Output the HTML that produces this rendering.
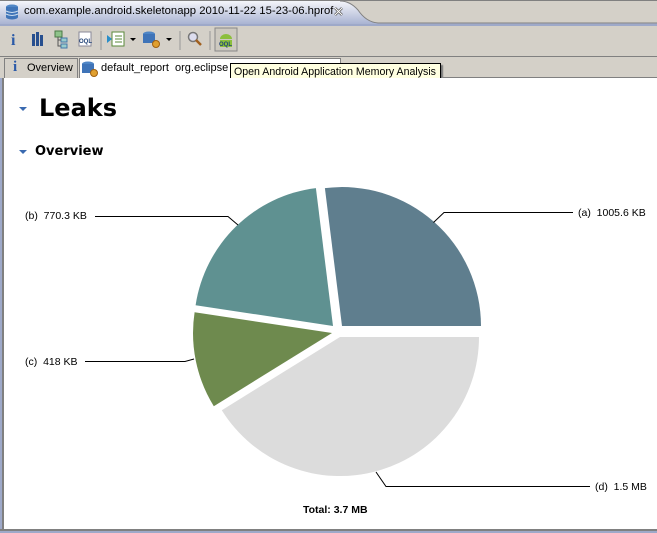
<!DOCTYPE html>
<html><head><style>
*{margin:0;padding:0;box-sizing:border-box}
body{width:657px;height:533px;overflow:hidden;background:#d4d0c8;font-family:"Liberation Sans",sans-serif;font-size:11px;position:relative}
.abs{position:absolute;white-space:nowrap}
</style></head><body>
<div class="abs" style="left:0;top:0;width:657px;height:25px;background:#d4d0c8;border-top:1px solid #808080"></div>
<svg class="abs" style="left:0;top:0" width="657" height="27">
<defs><linearGradient id="tg" x1="0" y1="0" x2="0" y2="1"><stop offset="0" stop-color="#f4f5fa"/><stop offset="1" stop-color="#a3aecf"/></linearGradient></defs>
<path d="M0 1 L340 1 Q350 1 358 10 Q366 22 378 23 L657 23 L657 26 L0 26 Z" fill="url(#tg)"/>
<path d="M340 1 Q350 1 358 10 Q366 22 378 23 L657 23" fill="none" stroke="#808080"/>
<rect x="0" y="24" width="657" height="2" fill="#9ea9c9"/>
<g transform="translate(4,3)"><ellipse cx="8" cy="4" rx="6" ry="2.5" fill="#4f86c6"/><rect x="2" y="4" width="12" height="10" fill="#3f74b8"/><ellipse cx="8" cy="14" rx="6" ry="2.5" fill="#3f74b8"/><path d="M2 8 Q8 11 14 8 M2 11 Q8 14 14 11" stroke="#cde" fill="none"/></g>
<path d="M335 8 l7 7 M342 8 l-7 7" stroke="#555" stroke-width="2.5"/><path d="M335 8 l7 7 M342 8 l-7 7" stroke="#fff" stroke-width="1"/>
</svg>
<div class="abs" style="left:24px;top:5px;font-size:11.3px;color:#000">com.example.android.skeletonapp 2010-11-22 15-23-06.hprof</div>
<svg class="abs" style="left:0;top:26px" width="260" height="30">
<text x="11" y="19" font-family="Liberation Serif" font-weight="bold" font-size="16" fill="#2b5aa8">i</text>
<rect x="32" y="8" width="3" height="12" fill="#274f8f"/><rect x="36" y="6" width="3" height="14" fill="#274f8f"/><rect x="40" y="9" width="3" height="11" fill="#274f8f"/>
<rect x="55" y="5" width="7" height="6" fill="#8ec38a" stroke="#4a7a46"/><rect x="61" y="12" width="6" height="4" fill="#9cc" stroke="#47a"/><rect x="61" y="18" width="6" height="4" fill="#9cc" stroke="#47a"/><path d="M58 11 V20 H61 M58 14 H61" stroke="#555" fill="none"/>
<rect x="79" y="6" width="12" height="14" fill="#fff" stroke="#889"/><text x="79" y="17" font-size="6" font-weight="bold" fill="#247">OQL</text>
<line x1="101" y1="5" x2="101" y2="24" stroke="#999"/>
<path d="M107 9 l5 4 -5 4z" fill="#2a8ec8"/><rect x="112" y="6" width="12" height="14" fill="#fff" stroke="#5a8a3a"/><path d="M115 10h7M115 13h7M115 16h7" stroke="#5a8a3a"/>
<path d="M130 12 l3 3 3-3z" fill="#000"/>
<ellipse cx="149" cy="8" rx="6" ry="2.5" fill="#4f86c6"/><rect x="143" y="8" width="12" height="9" fill="#3f74b8"/><circle cx="156" cy="18" r="3.5" fill="#e0a030" stroke="#a06010"/>
<path d="M166 12 l3 3 3-3z" fill="#000"/>
<line x1="180" y1="5" x2="180" y2="24" stroke="#999"/>
<circle cx="193" cy="11" r="4.5" fill="#dde" stroke="#777" stroke-width="1.5"/><path d="M196 14 l5 5" stroke="#a06020" stroke-width="2.5"/>
<line x1="210" y1="5" x2="210" y2="24" stroke="#999"/>
<rect x="215" y="2" width="22" height="23" fill="#cdc9c0" stroke="#888"/>
<path d="M220 13 a6 5 0 0 1 12 0z" fill="#8cbf3c"/><rect x="220" y="14" width="12" height="7" fill="#8cbf3c"/><text x="219" y="20" font-size="6" font-weight="bold" fill="#247">OQL</text>
</svg>
<div class="abs" style="left:0;top:56px;width:657px;height:1px;background:#808080"></div>
<div class="abs" style="left:4px;top:58px;width:74px;height:20px;border:1px solid #808080;border-bottom:none;background:#d4d0c8"></div>
<div class="abs" style="left:13px;top:59px;font-family:'Liberation Serif';font-weight:bold;font-size:15px;color:#2b5aa8">i</div>
<div class="abs" style="left:27px;top:62px">Overview</div>
<div class="abs" style="left:79px;top:58px;width:262px;height:21px;border:1px solid #808080;border-bottom:none;background:#fff"></div>
<svg class="abs" style="left:81px;top:60px" width="18" height="18"><ellipse cx="7" cy="4" rx="6" ry="2.5" fill="#4f86c6"/><rect x="1" y="4" width="12" height="9" fill="#3f74b8"/><circle cx="13" cy="13" r="3.5" fill="#e0a030" stroke="#a06010"/></svg>
<div class="abs" style="left:101px;top:62px">default_report&nbsp; org.eclipse</div>
<div class="abs" style="left:230px;top:63px;width:211px;height:18px;background:#ffffe1;border:1px solid #000;box-shadow:2px 2px 1px #777;font-size:10.6px;padding:2px 0 0 3px;overflow:hidden">Open Android Application Memory Analysis</div>
<div class="abs" style="left:443px;top:77px;width:214px;height:1px;background:#808080"></div>
<div class="abs" style="left:0;top:78px;width:2px;height:455px;background:#9ea9c9"></div>
<div class="abs" style="left:2px;top:78px;width:2px;height:453px;background:#808080"></div>
<div class="abs" style="left:0;top:529px;width:657px;height:2px;background:#808080"></div>
<div class="abs" style="left:0;top:531px;width:657px;height:2px;background:#9ea9c9"></div>
<div class="abs" style="left:4px;top:78px;width:653px;height:451px;background:#fff"></div>
<svg class="abs" style="left:0;top:0" width="657" height="533">
<path d="M19 107 l8 0 -4 4z" fill="#3a6ab0"/>
<path d="M19 150 l8 0 -4 4z" fill="#3a6ab0"/>
<path d="M342 326 L481 326 A139 139 0 0 0 324.9 188.1 Z" fill="#5f7e8e"/>
<path d="M333 326 L315.9 188.1 A139 139 0 0 0 195.6 305.2 Z" fill="#5f9191"/>
<path d="M332 333 L194.6 312.2 A139 139 0 0 0 213.8 406.2 Z" fill="#6e8a4e"/>
<path d="M340 337 L221.8 410.2 A139 139 0 0 0 479 337 Z" fill="#dcdcdc"/>
<g stroke="#000" fill="none" stroke-width="1">
<path d="M433.5 222.5 L444 212.5 H573"/>
<path d="M95 216.5 H228 L238 225"/>
<path d="M85 361.5 H185 L194 359"/>
<path d="M376 472 L386 486.5 H590"/>
</g>
<g font-family="Liberation Sans" font-size="10.5" fill="#000">
<text x="578" y="216">(a)&#160; 1005.6 KB</text>
<text x="25" y="219">(b)&#160; 770.3 KB</text>
<text x="25" y="365">(c)&#160; 418 KB</text>
<text x="595" y="490">(d)&#160; 1.5 MB</text>
<text x="303" y="513" font-weight="bold">Total: 3.7 MB</text>
</g>
</svg>
<div class="abs" style="left:39px;top:94px;font-family:'DejaVu Sans';font-weight:bold;font-size:24px;color:#000">Leaks</div>
<div class="abs" style="left:35px;top:144px;font-family:'DejaVu Sans';font-weight:bold;font-size:13px;color:#000">Overview</div>
</body></html>
